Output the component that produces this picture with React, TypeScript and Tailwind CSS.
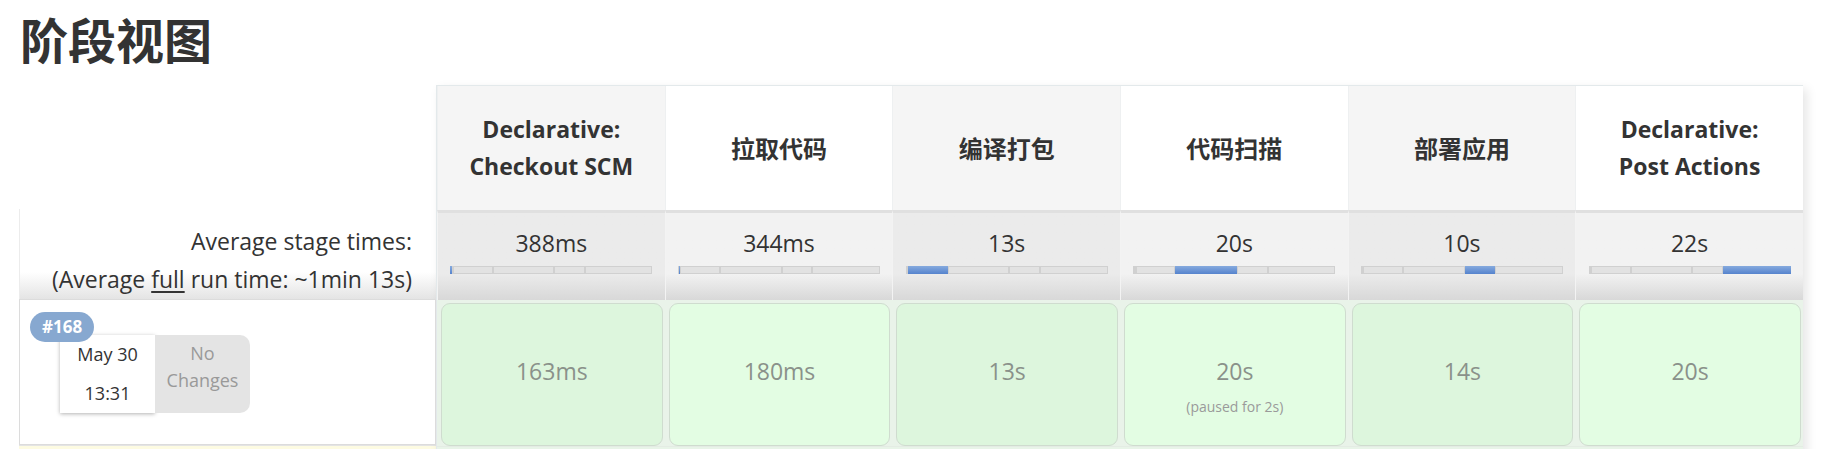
import React from 'react';

interface Stage {
  name: string[];
  avg: string;
  avgMs: number;
  run: string;
  paused?: string;
}

const stages: Stage[] = [
  { name: ['Declarative:', 'Checkout SCM'], avg: '388ms', avgMs: 388, run: '163ms' },
  { name: ['拉取代码'], avg: '344ms', avgMs: 344, run: '180ms' },
  { name: ['编译打包'], avg: '13s', avgMs: 13000, run: '13s' },
  { name: ['代码扫描'], avg: '20s', avgMs: 20000, run: '20s', paused: '(paused for 2s)' },
  { name: ['部署应用'], avg: '10s', avgMs: 10000, run: '14s' },
  { name: ['Declarative:', 'Post Actions'], avg: '22s', avgMs: 22000, run: '20s' },
];

const totalMs = stages.reduce((sum, s) => sum + s.avgMs, 0);
const BAR_W = 202;

const font = { fontFamily: "'Open Sans', 'Noto Sans CJK SC', sans-serif" };

const StageBar: React.FC<{ active: number }> = ({ active }) => (
  <div className="mx-auto flex h-[8px] w-[202px] bg-[#dedede] shadow-[inset_0_0_2px_#bdbdbd]">
    {stages.map((s, i) => (
      <div
        key={i}
        className={
          i === active
            ? 'h-full bg-linear-to-b from-[#86aade] to-[#5583cd]'
            : 'h-full bg-[#e2e2e2] shadow-[inset_0_0_0_1px_#d0d0d0]'
        }
        style={{ width: `${Math.max(1, (s.avgMs / totalMs) * BAR_W)}px` }}
      />
    ))}
  </div>
);

export default function App() {
  return (
    <div className="min-h-screen bg-white text-[#333]" style={font}>
      <h1 className="pl-[20px] pt-[12px] text-[48px] font-bold leading-[58px] text-[#333]">阶段视图</h1>

      <div className="mt-[15px] flex pl-[19px]">
        {/* left column */}
        <div className="flex w-[417px] flex-col">
          <div className="h-[124px]" />
          <div className="h-[90px] border-l border-[#ececec] bg-linear-to-b from-white from-70% to-[#e4e4e4] pr-[24px] pt-[13px] text-right text-[23px] leading-[38px]">
            <div>Average stage times:</div>
            <div>
              (Average <span className="underline underline-offset-[3px]">full</span> run time: ~1min 13s)
            </div>
          </div>
          <div className="relative h-[146px] border border-[#dcdcdc] bg-white">
            <span className="absolute left-[10px] top-[12px] z-10 rounded-full bg-[#87a8d0] px-[12px] text-[17px] font-bold leading-[30px] text-white">
              #168
            </span>
            <div className="ml-[40px] mt-[35px] flex h-[78px]">
              <div className="flex w-[95px] flex-col items-center justify-center bg-white text-[18px] leading-[39px] shadow-[0_1px_4px_rgba(0,0,0,0.3)]">
                <div>May 30</div>
                <div>13:31</div>
              </div>
              <div className="flex w-[95px] flex-col items-center rounded-r-[10px] bg-[#e4e4e4] pt-[5px] text-[18px] leading-[27px] text-[#999]">
                <div>No</div>
                <div>Changes</div>
              </div>
            </div>
          </div>
          <div className="h-[20px] border-t border-[#e4e4e4] bg-[#fdfbe2]" />
        </div>

        {/* stage columns */}
        <div className="grid grid-cols-[repeat(6,227.67px)] border-l border-t border-[#e3e9eb] shadow-[4px_4px_10px_rgba(0,0,0,0.1)]">
          {stages.map((s, i) => (
            <div
              key={`h${i}`}
              className={`flex h-[124px] flex-col items-center justify-center border-l border-[#eef0f1] text-center font-bold leading-[37px] ${
                s.name.length > 1 ? 'text-[23px]' : 'text-[24px]'
              } ${i % 2 === 0 ? 'bg-[#f5f5f5]' : 'bg-white'}`}
            >
              {s.name.map((line) => (
                <div key={line}>{line}</div>
              ))}
            </div>
          ))}

          {stages.map((s, i) => (
            <div
              key={`a${i}`}
              className={`h-[90px] border-l border-t-[3px] border-l-[#f3f3f3] border-t-[#e0e0e0] bg-linear-to-b from-70% to-[#d8d8d8] pt-[15px] text-center ${
                i % 2 === 0 ? 'from-[#ebebeb]' : 'from-[#f2f2f2]'
              }`}
            >
              <div className="text-[23px] leading-[30px] text-[#333]">{s.avg}</div>
              <div className="mt-[8px]">
                <StageBar active={i} />
              </div>
            </div>
          ))}

          {stages.map((s, i) => (
            <div key={`r${i}`} className="h-[146px] bg-[#e9f3e9] pl-[4px] pr-[2px] pt-[3px]">
              <div
                className={`flex h-[143px] flex-col items-center rounded-[9px] border border-[#cfdccf] pt-[50px] ${
                  i % 2 === 0 ? 'bg-[#ddf6dd]' : 'bg-[#e3fde3]'
                }`}
              >
                <div className="text-[23px] leading-[34px] text-[#8a918a]">{s.run}</div>
                {s.paused && <div className="mt-[9px] text-[14px] leading-[20px] text-[#9a9a9a]">{s.paused}</div>}
              </div>
            </div>
          ))}

          {stages.map((_, i) => (
            <div key={`n${i}`} className="h-[20px] border-t border-[#e4ece4] bg-[#e8f4e8]" />
          ))}
        </div>
      </div>
    </div>
  );
}
